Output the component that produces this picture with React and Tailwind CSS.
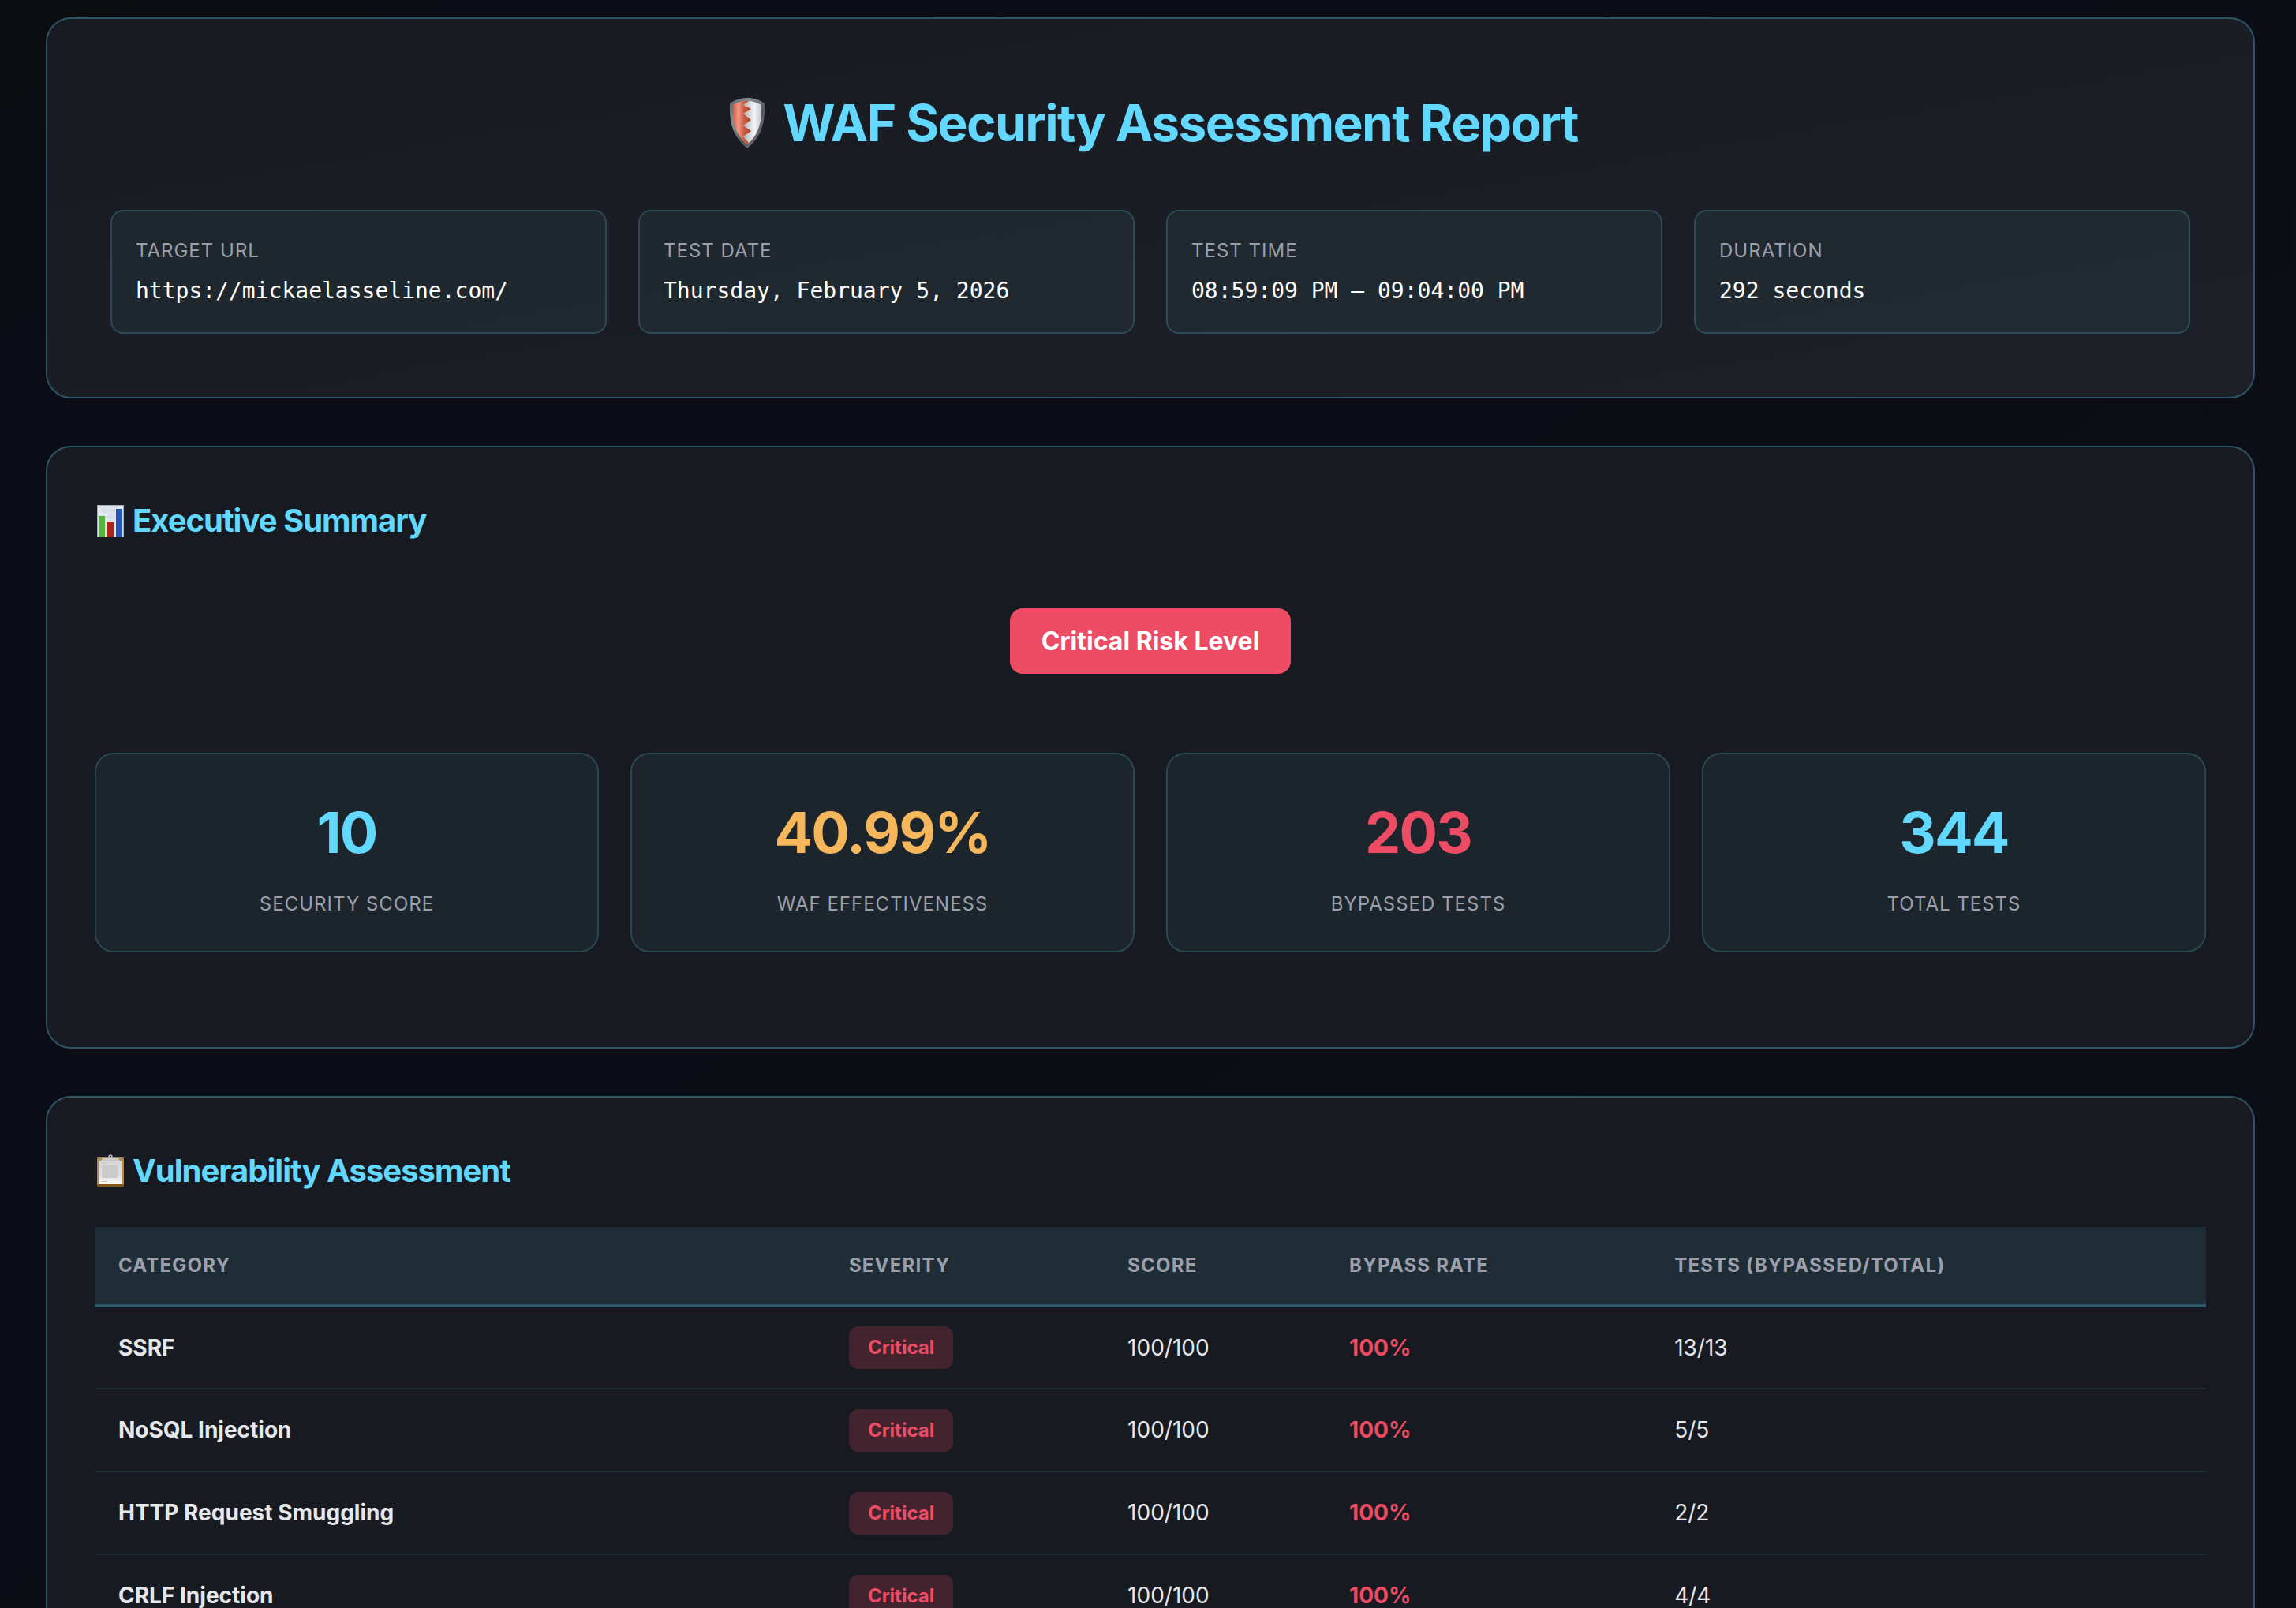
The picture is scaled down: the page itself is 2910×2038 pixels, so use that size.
const infoItems = [
  { label: "Target URL", value: "https://mickaelasseline.com/" },
  { label: "Test Date", value: "Thursday, February 5, 2026" },
  { label: "Test Time", value: "08:59:09 PM – 09:04:00 PM" },
  { label: "Duration", value: "292 seconds" },
];

const stats = [
  { label: "Security Score", value: "10", color: "text-[#62d8ff]" },
  { label: "WAF Effectiveness", value: "40.99%", color: "text-[#f5b65c]" },
  { label: "Bypassed Tests", value: "203", color: "text-[#ec4c64]" },
  { label: "Total Tests", value: "344", color: "text-[#62d8ff]" },
];

const vulnerabilities = [
  { category: "SSRF", severity: "Critical", score: 100, rate: 100, bypassed: 13, total: 13 },
  { category: "NoSQL Injection", severity: "Critical", score: 100, rate: 100, bypassed: 5, total: 5 },
  { category: "HTTP Request Smuggling", severity: "Critical", score: 100, rate: 100, bypassed: 2, total: 2 },
  { category: "CRLF Injection", severity: "Critical", score: 100, rate: 100, bypassed: 4, total: 4 },
];

const ShieldIcon = () => (
  <svg className="w-[60px] h-[72px]" viewBox="0 0 60 72" aria-hidden="true">
    <defs>
      <linearGradient id="shieldRim" x1="0" y1="0" x2="1" y2="1">
        <stop offset="0" stopColor="#5d6063" />
        <stop offset="0.3" stopColor="#8d9093" />
        <stop offset="0.6" stopColor="#56595c" />
        <stop offset="1" stopColor="#77797c" />
      </linearGradient>
      <linearGradient id="shieldRed" x1="0" y1="0" x2="1" y2="0">
        <stop offset="0" stopColor="#d9593f" />
        <stop offset="0.3" stopColor="#f2988a" />
        <stop offset="0.6" stopColor="#cf5c43" />
        <stop offset="1" stopColor="#a5412b" />
      </linearGradient>
      <linearGradient id="shieldSilver" x1="0" y1="0" x2="1" y2="0">
        <stop offset="0.3" stopColor="#a4a6a8" />
        <stop offset="0.75" stopColor="#f2f4f6" />
        <stop offset="1" stopColor="#c3c8cd" />
      </linearGradient>
    </defs>
    <path d="M31 4c8 0 16 2.500 22 7 1 27-5 43-22 57C14 54 8 38 9 11c6-4.500 14-7 22-7z" fill="url(#shieldRim)" />
    <path d="M31 8c7 0 13 2 18 5 .6 24-4 38-18 50C17 51 12.400 37 13 13c5-3 11-5 18-5z" fill="url(#shieldSilver)" />
    <path d="M31 8c-7 0-13 2-18 5-.6 24 4 38 18 50l2-2-7-8 10-7-10-7 10-7-10-8 10-6-10-5 7-5z" fill="url(#shieldRed)" />
  </svg>
);

const ChartIcon = () => (
  <svg className="w-10 h-11" viewBox="0 0 40 44" aria-hidden="true">
    <rect x="3" y="2" width="34" height="40" fill="#a9abb3" />
    <rect x="4" y="3" width="32" height="39" fill="#dfe5ee" />
    <path d="M4 10h32M4 17h32M4 24h32M4 31h32M12 3v39M20 3v39M28 3v39" stroke="#cdd5e0" strokeWidth="0.600" />
    <rect x="5" y="16" width="8" height="26" fill="#54b53a" />
    <rect x="16" y="23" width="8" height="19" fill="#ad2219" />
    <rect x="27" y="7" width="8" height="35" fill="#2458b8" />
  </svg>
);

const ClipboardIcon = () => (
  <svg className="w-10 h-11" viewBox="0 0 40 44" aria-hidden="true">
    <defs>
      <linearGradient id="paper" x1="0" y1="0" x2="0" y2="1">
        <stop offset="0" stopColor="#d6d6d6" />
        <stop offset="0.7" stopColor="#e2e2e2" />
        <stop offset="1" stopColor="#fbfbfb" />
      </linearGradient>
    </defs>
    <rect x="3" y="5" width="34" height="37" rx="2" fill="#b08a50" />
    <path d="M3 39h34v1a2 2 0 0 1-2 2H5a2 2 0 0 1-2-2z" fill="#80571c" />
    <rect x="6" y="10" width="28" height="28" fill="url(#paper)" />
    <path d="M9 15h20l1 13-3 3H9z" fill="#cbcbcb" />
    <path d="M9 12.500h5M9 33.500h4M9 35.500h7" stroke="#c6c6c6" />
    <path d="M10 6h20l2 3v1H8V9z" fill="#c8cad2" />
    <rect x="8" y="9" width="24" height="1" fill="#85878e" />
    <circle cx="20" cy="4" r="2" fill="none" stroke="#b9bbc1" strokeWidth="1.500" />
  </svg>
);

const Section = ({ icon, title, children }) => (
  <section className="p-[60px] rounded-[32px] border-2 border-[#2d5564] bg-[#181a21]">
    <h2 className="flex items-center gap-2 text-[40px] leading-[66px] font-bold tracking-tight text-[#62d8ff]">
      {icon}
      {title}
    </h2>
    {children}
  </section>
);

const App = () => {
  return (
    <main className="min-h-screen pl-[58px] pr-[52px] pt-[22px] pb-[60px] flex flex-col gap-[60px] bg-linear-to-br from-[#0a0d0f] via-[#0a0d15] via-10% to-[#0b0e15] font-['Inter',sans-serif] text-[28px] leading-[45px] text-[#e6e7ea]">
      <header className="p-20 rounded-[32px] border-2 border-[#2d5564] bg-linear-to-br from-[#181a22] to-[#1d2027]">
        <h1 className="flex items-center justify-center gap-4 mb-[58px] text-[64px] leading-[104px] font-bold tracking-tight text-[#62d8ff]">
          <ShieldIcon />
          WAF Security Assessment Report
        </h1>
        <dl className="grid grid-cols-4 gap-10">
          {infoItems.map((item) => (
            <div key={item.label} className="p-[30px] rounded-2xl border-2 border-[#62d8ff]/20 bg-[#62dcd8]/6">
              <dt className="mb-2 text-2xl leading-10 uppercase tracking-[1px] text-[#9c9fab]">{item.label}</dt>
              <dd className="font-['DejaVu_Sans_Mono',monospace] text-white">{item.value}</dd>
            </div>
          ))}
        </dl>
      </header>

      <Section icon={<ChartIcon />} title="Executive Summary">
        <div className="flex justify-center mt-[78px] mb-[100px]">
          <span className="px-10 py-4 rounded-2xl bg-[#ec4c64] text-[32px] leading-[51px] font-bold text-white">
            Critical Risk Level
          </span>
        </div>
        <div className="grid grid-cols-4 gap-10 mb-[60px]">
          {stats.map((stat) => (
            <div key={stat.label} className="p-10 rounded-3xl border-2 border-[#62d8ff]/20 bg-[#5ae2c8]/6 text-center">
              <p className={`mb-[14px] text-7xl leading-[117px] font-bold tracking-tight ${stat.color}`}>{stat.value}</p>
              <p className="text-2xl leading-[38px] uppercase tracking-[1px] text-[#9c9fab]">{stat.label}</p>
            </div>
          ))}
        </div>
      </Section>

      <Section icon={<ClipboardIcon />} title="Vulnerability Assessment">
        <table className="mt-[38px] w-full table-fixed border-collapse text-left">
          <thead className="bg-[#62d8ff]/10 text-2xl leading-10 uppercase tracking-wider text-[#9c9fab]">
            <tr className="border-b-4 border-[#2d5868]">
              <th className="w-[34.6%] px-[30px] py-[29px] font-bold">Category</th>
              <th className="w-[13.2%] px-[30px] py-[29px] font-bold">Severity</th>
              <th className="w-[10.5%] px-[30px] py-[29px] font-bold">Score</th>
              <th className="w-[15.4%] px-[30px] py-[29px] font-bold">Bypass Rate</th>
              <th className="px-[30px] py-[29px] font-bold">Tests (Bypassed/Total)</th>
            </tr>
          </thead>
          <tbody>
            {vulnerabilities.map((v) => (
              <tr key={v.category} className="h-[105px] border-b-2 border-[#62d8ff]/10">
                <td className="px-[30px] font-bold">{v.category}</td>
                <td className="px-[30px]">
                  <span className="inline-block align-middle px-6 py-2 rounded-xl bg-[#ec4c64]/20 text-2xl leading-[38px] font-bold text-[#ec4c64]">
                    {v.severity}
                  </span>
                </td>
                <td className="px-[30px]">{v.score}/100</td>
                <td className="px-[30px] font-bold text-[#ec4c64]">{v.rate}%</td>
                <td className="px-[30px]">{v.bypassed}/{v.total}</td>
              </tr>
            ))}
          </tbody>
        </table>
      </Section>
    </main>
  );
};

export default App;
